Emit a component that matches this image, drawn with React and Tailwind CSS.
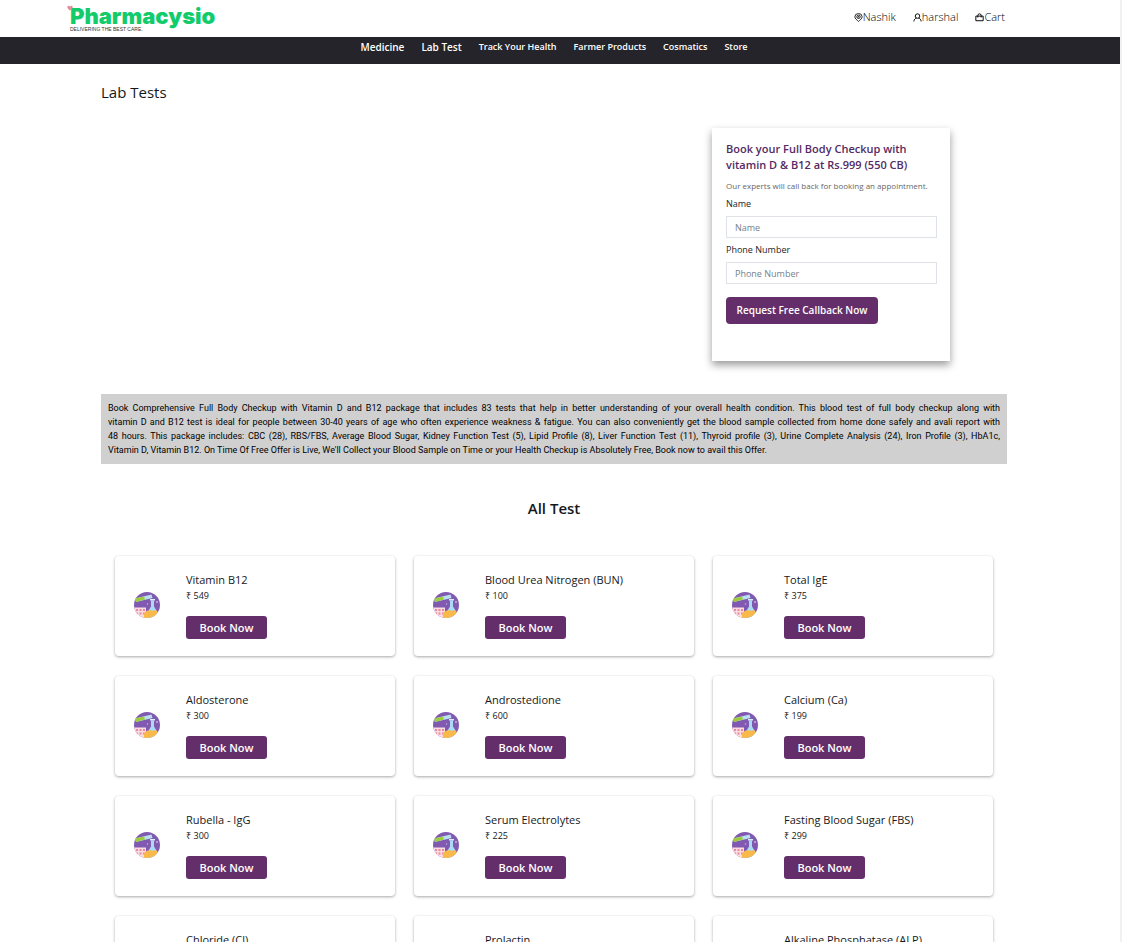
import React from "react";

const navLinks = [
  { label: "Medicine", size: "text-[10px]" },
  { label: "Lab Test", size: "text-[10px]" },
  { label: "Track Your Health", size: "text-[9px]" },
  { label: "Farmer Products", size: "text-[9px]" },
  { label: "Cosmatics", size: "text-[9px]" },
  { label: "Store", size: "text-[9px]" },
];

const packageLines = [
  "Book Comprehensive Full Body Checkup with Vitamin D and B12 package that includes 83 tests that help in better understanding of your overall health condition. This blood test of full body checkup along with",
  "vitamin D and B12 test is ideal for people between 30-40 years of age who often experience weakness & fatigue. You can also conveniently get the blood sample collected from home done safely and avali report with",
  "48 hours. This package includes: CBC (28), RBS/FBS, Average Blood Sugar, Kidney Function Test (5), Lipid Profile (8), Liver Function Test (11), Thyroid profile (3), Urine Complete Analysis (24), Iron Profile (3), HbA1c,",
];

const packageLastLine =
  "Vitamin D, Vitamin B12. On Time Of Free Offer is Live, We'll Collect your Blood Sample on Time or your Health Checkup is Absolutely Free, Book now to avail this Offer.";

const tests = [
  { name: "Vitamin B12", price: 549 },
  { name: "Blood Urea Nitrogen (BUN)", price: 100 },
  { name: "Total IgE", price: 375 },
  { name: "Aldosterone", price: 300 },
  { name: "Androstedione", price: 600 },
  { name: "Calcium (Ca)", price: 199 },
  { name: "Rubella - IgG", price: 300 },
  { name: "Serum Electrolytes", price: 225 },
  { name: "Fasting Blood Sugar (FBS)", price: 299 },
  { name: "Chloride (Cl)", price: 200 },
  { name: "Prolactin", price: 350 },
  { name: "Alkaline Phosphatase (ALP)", price: 150 },
];

function PinIcon() {
  return (
    <svg viewBox="0 0 16 16" className="size-[9px]" fill="none" stroke="currentColor" strokeWidth="1.5" aria-hidden="true">
      <path d="M8 15C5.5 12.6 1.5 10 1.5 6.8a6.5 5.8 0 0 1 13 0C14.5 10 10.5 12.6 8 15Z" />
      <circle cx="8" cy="6.8" r="3" />
      <circle cx="8" cy="6.8" r="0.6" fill="currentColor" />
    </svg>
  );
}

function UserIcon() {
  return (
    <svg viewBox="0 0 16 16" className="size-[9px]" fill="none" stroke="currentColor" strokeWidth="1.7" aria-hidden="true">
      <circle cx="8" cy="5.5" r="4" />
      <path d="M1.5 15c.3-3.2 2-5.3 4.5-6M14.5 15c-.3-3.2-2-5.3-4.5-6" />
    </svg>
  );
}

function BagIcon() {
  return (
    <svg viewBox="0 0 16 16" className="size-[9px]" fill="none" stroke="currentColor" strokeWidth="1.7" aria-hidden="true">
      <path d="M1.5 5.5h13v8.2h-13zM5 8V4.5a3 3 0 0 1 6 0V8" />
    </svg>
  );
}

function LabIcon() {
  return (
    <svg viewBox="0 0 52 52" className="size-[26px] shrink-0 rounded-full" aria-hidden="true">
      <rect width="52" height="52" fill="#8159b0" />
      <path d="M2 13 35 5l2 7L4 20z" fill="#b9e0f2" />
      <path d="M2 13 20 9l2 6L4 20z" fill="#9ccb3b" />
      <path d="M0 31h24v21H0z" fill="#fbdbe2" />
      <path d="M4 34h4v4H4zM11 34h4v4h-4zM18 34h4v4h-4zM4 41h4v4H4zM11 41h4v4h-4zM18 41h4v4h-4z" fill="#e98a9c" />
      <path d="M34 17h6v12l10 16v7H24v-6l10-17z" fill="#a9dcf2" />
      <path d="M32 14h10v3H32z" fill="#d8f0fa" />
      <path d="M20 43c6-8 10-7 15-6 5 2 7-2 10 0l7 8v7H20z" fill="#f8b84a" />
      <circle cx="46" cy="20" r="1.5" fill="#fff" />
      <circle cx="27" cy="24" r="1.5" fill="#cbb0e4" />
    </svg>
  );
}

function Logo() {
  return (
    <a href="#home" className="relative flex flex-col pl-[3px] pt-[5px]">
      <svg viewBox="0 0 14 14" className="absolute left-0 top-[5px] size-[6px]" aria-hidden="true">
        <path d="M7 13C3 10 0 7 1 3.5 2 1 5 1 7 4c2-3 5-3 6-.5C14 7 11 10 7 13Z" fill="#e58a94" />
      </svg>
      <span className="font-['Inter'] text-[22px] leading-[22px] font-black text-[#12cc6c]">Pharmacysio</span>
      <span className="font-['Liberation_Sans'] text-[5px] leading-[5px] text-[#333]">DELIVERING THE BEST CARE.</span>
    </a>
  );
}

function Field({ id, label, type }) {
  return (
    <div>
      <label htmlFor={id} className="block text-[9px] leading-[14px] text-[#212529]">{label}</label>
      <input
        id={id}
        type={type}
        placeholder={label}
        className="mt-[5px] block h-[22px] w-full border border-[#dfe3e8] bg-white px-2 text-[9px] text-[#212529] placeholder:text-[#757f8a]"
      />
    </div>
  );
}

function TestCard({ name, price }) {
  return (
    <li className="flex h-[100px] items-center rounded-[4px] bg-white pb-[2px] pl-[19px] shadow-[0_1px_3px_rgba(0,0,0,0.35)]">
      <LabIcon />
      <div className="ml-[26px]">
        <h3 className="text-[11px] leading-4">{name}</h3>
        <p className="text-[9px] leading-4">₹ {price}</p>
        <button type="button" className="mt-3 block h-[23px] w-[81px] rounded-[3px] bg-[#642e6b] pt-[2px] text-[11px] leading-4 font-semibold text-white">
          Book Now
        </button>
      </div>
    </li>
  );
}

export default function App() {
  return (
    <div className="h-screen overflow-y-auto border-r-2 border-[#f1f1f1] bg-white font-['Open_Sans','Noto_Sans',sans-serif] text-[#15181b] [scrollbar-width:none]">
      <header className="flex h-[37px] items-start justify-between pl-[67px] pr-[115px]">
        <Logo />
        <div className="flex gap-[17px] pt-[9px] text-[11px] leading-4 font-light text-black">
          <a href="#location" className="flex items-center"><PinIcon />Nashik</a>
          <a href="#account" className="flex items-center"><UserIcon />harshal</a>
          <a href="#cart" className="flex items-center"><BagIcon />Cart</a>
        </div>
      </header>
      <nav className="flex h-[27px] justify-center gap-[17px] bg-[#25242a] pr-3 pt-[2px] font-semibold text-white">
        {navLinks.map((l) => (
          <a key={l.label} href="#nav" className={`${l.size} leading-4`}>{l.label}</a>
        ))}
      </nav>
      <main className="pl-[101px] pr-[113px] pb-5">
        <h1 className="pt-[17px] text-[15px] leading-[22px]">Lab Tests</h1>
        <div className="mt-[25px] flex justify-end pr-[57px]">
          <form className="h-[233px] w-[238px] bg-white pl-[14px] pr-[13px] pt-[13px] shadow-[0_4px_8px_rgba(0,0,0,0.4)]">
            <h2 className="text-[11px] leading-4 font-semibold text-[#532a63]">
              Book your Full Body Checkup with<br />vitamin D &amp; B12 at Rs.999 (550 CB)
            </h2>
            <p className="mt-[7px] text-[8px] leading-3 text-[#666]">Our experts will call back for booking an appointment.</p>
            <div className="mt-[5px] flex flex-col gap-[5px]">
              <Field id="name" label="Name" type="text" />
              <Field id="phone" label="Phone Number" type="tel" />
            </div>
            <button type="button" className="mt-[13px] h-[27px] w-[152px] rounded-[4px] bg-[#642e6b] text-[10px] font-semibold whitespace-nowrap text-white">
              Request Free Callback Now
            </button>
          </form>
        </div>
        <p className="mt-[33px] bg-[#d0d0d0] p-[7px] font-['Roboto','Open_Sans',sans-serif] text-[9px] leading-[14px] text-black">
          {packageLines.map((line) => (
            <span key={line} className="block text-justify [text-align-last:justify]">{line} </span>
          ))}
          <span className="block">{packageLastLine}</span>
        </p>
        <h2 className="mt-[33px] text-center text-[15px] leading-[22px] font-semibold">All Test</h2>
        <ul className="mt-[37px] grid grid-cols-3 gap-x-[19px] gap-y-5 px-[14px]">
          {tests.map((t) => (
            <TestCard key={t.name} {...t} />
          ))}
        </ul>
      </main>
    </div>
  );
}
